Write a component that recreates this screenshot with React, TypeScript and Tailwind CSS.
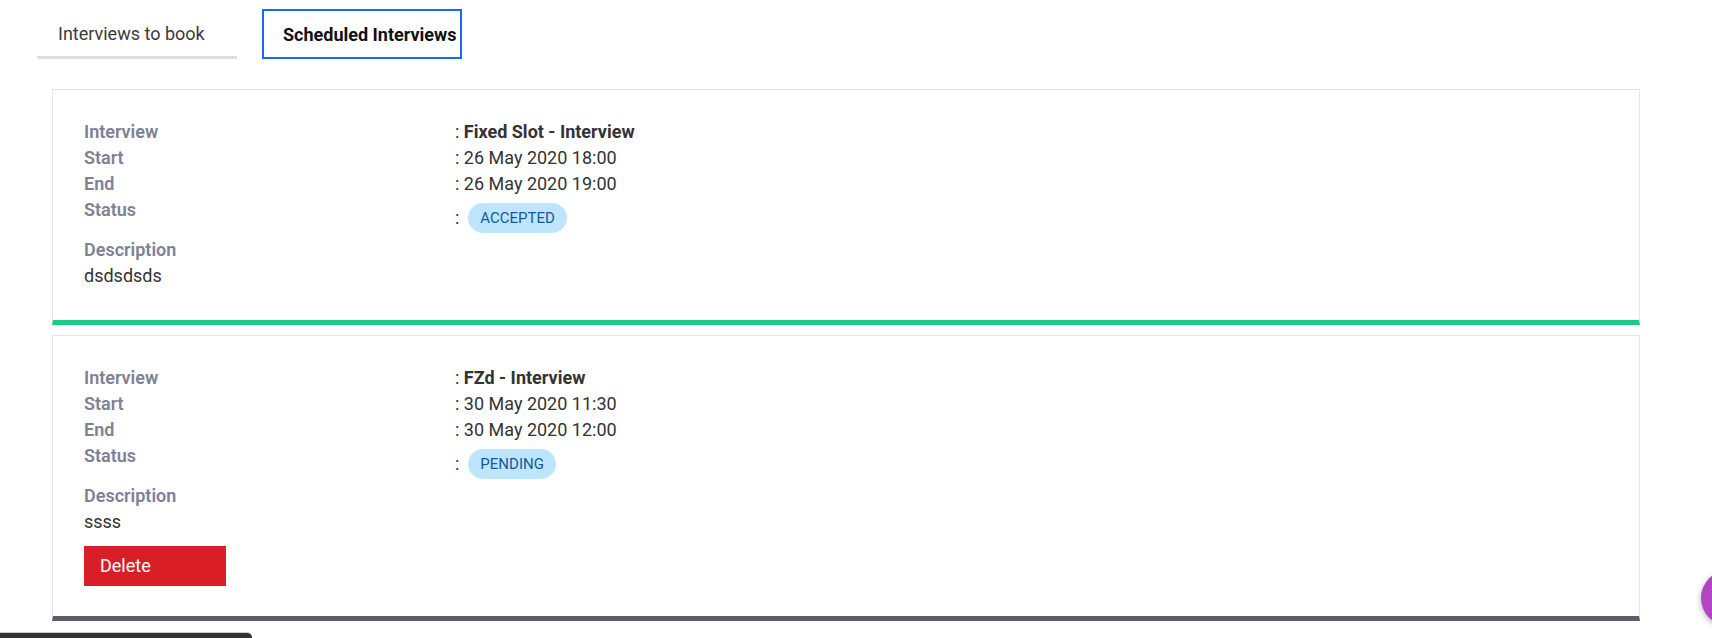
import { useState } from 'react';

type Interview = {
  id: number;
  title: string;
  start: string;
  end: string;
  status: string;
  description: string;
  canDelete: boolean;
  barColor: string;
};

const interviews: Interview[] = [
  {
    id: 1,
    title: 'Fixed Slot - Interview',
    start: '26 May 2020 18:00',
    end: '26 May 2020 19:00',
    status: 'ACCEPTED',
    description: 'dsdsdsds',
    canDelete: false,
    barColor: 'border-b-[#20c886]',
  },
  {
    id: 2,
    title: 'FZd - Interview',
    start: '30 May 2020 11:30',
    end: '30 May 2020 12:00',
    status: 'PENDING',
    description: 'ssss',
    canDelete: true,
    barColor: 'border-b-[#5b5c6c]',
  },
];

export default function App() {
  const [tab, setTab] = useState<'book' | 'scheduled'>('scheduled');

  return (
    <div className="min-h-screen bg-white font-['Roboto','Liberation_Sans',sans-serif] text-[18px] text-[#333]">
      {/* Tabs */}
      <div className="flex gap-[25px] pl-[37px] pt-[9px]">
        <button
          onClick={() => setTab('book')}
          className={`flex h-[50px] w-[200px] items-center text-left ${
            tab === 'book'
              ? 'border-2 border-[#1a66ff] pl-[19px] font-bold text-[#111]'
              : 'border-b-[3px] border-[#dedede] pl-[21px] pt-[2px] text-[#3a3a3a]'
          }`}
        >
          Interviews to book
        </button>
        <button
          onClick={() => setTab('scheduled')}
          className={`flex h-[50px] w-[200px] items-center text-left ${
            tab === 'scheduled'
              ? 'border-2 border-[#1a66ff] pl-[19px] font-bold text-[#111]'
              : 'border-b-[3px] border-[#dedede] pl-[21px] pt-[2px] text-[#3a3a3a]'
          }`}
        >
          Scheduled Interviews
        </button>
      </div>

      {/* Interview cards */}
      <div className="ml-[52px] mt-[30px] flex w-[1588px] flex-col gap-[10px]">
        {interviews.map((iv) => (
          <div
            key={iv.id}
            className={`border border-b-[5px] border-[#e4e4ee] ${iv.barColor} bg-white px-[31px] pt-[29px] ${
              iv.canDelete ? 'pb-[30px]' : 'pb-[31px]'
            } leading-[26px]`}
          >
            <div className="flex">
              <div className="w-[371px] font-semibold text-[#7e8194]">Interview</div>
              <div>
                : <span className="font-bold text-[#333]">{iv.title}</span>
              </div>
            </div>
            <div className="flex">
              <div className="w-[371px] font-semibold text-[#7e8194]">Start</div>
              <div>: {iv.start}</div>
            </div>
            <div className="flex">
              <div className="w-[371px] font-semibold text-[#7e8194]">End</div>
              <div>: {iv.end}</div>
            </div>
            <div className="flex items-start">
              <div className="w-[371px] font-semibold text-[#7e8194]">Status</div>
              <div className="mt-[6px] flex items-center">
                <span>:</span>
                <span className="ml-[9px] rounded-full bg-[#bde5fd] px-[12px] text-[15px] leading-[30px] text-[#125a9a]">
                  {iv.status}
                </span>
              </div>
            </div>
            <div className="mt-[4px] font-semibold text-[#7e8194]">Description</div>
            <div>{iv.description}</div>
            {iv.canDelete && (
              <button className="mt-[11px] flex h-[40px] w-[142px] items-center bg-[#d91e28] pl-[16px] text-white">
                Delete
              </button>
            )}
          </div>
        ))}
      </div>

      {/* Floating chat bubble */}
      <div className="fixed left-[1701px] top-[570px] h-[56px] w-[56px] rounded-full bg-[#b444c4] shadow-[0_2px_6px_rgba(0,0,0,0.3)]" />

      {/* Bottom-left bar */}
      <div className="fixed left-0 top-[632px] h-[20px] w-[252px] rounded-tr-[5px] border-t border-[#d0d0d0] bg-[#333]" />
    </div>
  );
}
